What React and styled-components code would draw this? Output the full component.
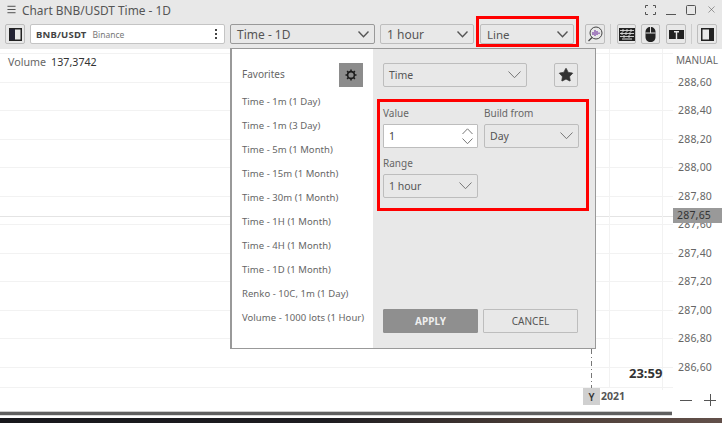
import React from "react";
import styled, { createGlobalStyle } from "styled-components";
import { Menu, X, Star } from "lucide-react";

const Global = createGlobalStyle`
  html, body { margin: 0; padding: 0; background: #fff; overflow: hidden; }
  * { box-sizing: border-box; }
  body { font-family: "Noto Sans", "Open Sans", sans-serif; color: #555; }
`;

const Page = styled.div`
  width: 722px; height: 423px; display: flex; flex-direction: column; background: #fff; overflow: hidden;
`;
const TitleBar = styled.div`
  height: 24px; background: #e8e8e8; display: flex; align-items: center; padding: 0 5px 5px 6px; flex: none;
  color: #555; font-size: 11.9px;
`;
const TitleText = styled.span` margin-left: 5px; flex: 1; `;
const WinIcons = styled.div` display: flex; gap: 10px; align-items: center; color: #555; `;
const Toolbar = styled.div`
  height: 25px; background: #e8e8e8; display: flex; align-items: flex-start; padding-left: 5px; flex: none;
`;
const IconBtn = styled.button`
  width: ${p => p.$w || 20}px; height: 20px; border: 1px solid #bdbdbd; border-radius: 2px; background: #e8e8e8; padding: 0;
  display: flex; align-items: center; justify-content: center; margin-left: ${p => p.$ml || 0}px; flex: none; color: #333;
`;
const SymbolBox = styled.div`
  width: 195px; height: 20px; margin-left: 5px; background: #fff; border: 1px solid #c4c4c4; border-radius: 2px;
  display: flex; align-items: center; padding: 0 6px 0 5px; font-size: 9.5px; flex: none;
`;
const Sym = styled.b` color: #444; letter-spacing: .2px; `;
const Exch = styled.span` color: #777; font-size: 8.5px; margin-left: 6px; flex: 1; `;
const Dots = styled.span`
  display: flex; flex-direction: column; gap: 2px; margin-right: 1px;
  i { width: 2px; height: 2px; background: #444; display: block; }
`;
const Select = styled.div`
  width: ${p => p.$w}px; height: ${p => p.$h || 20}px; margin-left: ${p => p.$ml || 0}px; flex: none;
  border: 1px solid ${p => p.$dark ? "#999" : "#bdbdbd"}; border-radius: 2px; background: #e8e8e8;
  display: flex; align-items: center; justify-content: space-between; padding: 0 5px 0 ${p => p.$pl || 6}px;
  font-size: ${p => p.$fs || 12}px; color: #555;
`;
const LineHighlight = styled.div`
  width: 103px; height: 28px; margin: -8px 0 0 2px; border: 3px solid #f00; padding: 5px 0 0 1px; flex: none; border-bottom-width: 0;
  box-shadow: 0 3px 0 #f00;
`;
const Sep = styled.span` width: 1px; height: 20px; background: #ccc; margin: 0 ${p => p.$mr || 5}px 0 5px; flex: none; `;

const Body = styled.div` flex: 1; display: flex; min-height: 0; `;
const Plot = styled.div` position: relative; width: 673px; flex: none; height: 100%; padding: 6px 8px; `;
const Grid = styled.svg` position: absolute; left: 0; top: 0; `;
const Legend = styled.div` position: relative; font-size: 10.7px; color: #666; display: flex; gap: 5px; `;
const LegendVal = styled.span` color: #333; `;
const Axis = styled.div` flex: 1; display: flex; flex-direction: column; position: relative; `;
const Manual = styled.div` font-size: 10px; color: #666; height: 18.5px; padding: 4px 0 0 3px; `;
const Prices = styled.div` display: flex; flex-direction: column; `;
const Price = styled.div` height: 28.5px; line-height: 28.5px; font-size: 10.5px; color: #666; padding-left: 5px; letter-spacing: .2px; `;
const PriceTag = styled.div`
  position: absolute; left: 0; right: 0; top: 159px; height: 15px; background: #999; color: #333; font-size: 10.5px;
  line-height: 15px; padding-left: 4px; letter-spacing: .2px;
`;
const Zoomers = styled.div`
  position: absolute; left: 7px; bottom: 12px; display: flex; gap: 12px; align-items: center;
`;

const Dialog = styled.div`
  position: absolute; left: 230px; top: -1px; width: 366px; height: 301px; display: flex;
  border: 1px solid #999; background: #e8e8e8; box-shadow: inset 1px 0 0 #999;
`;
const Favs = styled.div`
  width: 141px; background: #fff; margin-left: 1px; padding: 14px 0 0 10px; flex: none;
`;
const FavHead = styled.div`
  height: 24px; display: flex; align-items: center; justify-content: space-between; padding-right: 10px; font-size: 10px; color: #666;
`;
const FavTitle = styled.span` margin-top: -2px; `;
const GearBtn = styled.div`
  width: 24px; height: 24px; background: #8c8c8c; display: flex; align-items: center; justify-content: center;
`;
const FavList = styled.div` margin-top: 3px; `;
const FavItem = styled.div` height: 24px; line-height: 24px; font-size: 9.5px; letter-spacing: .05px; color: #666; white-space: nowrap; `;
const Form = styled.div`
  flex: 1; display: flex; flex-direction: column; padding: 14px 0 0 4px;
`;
const TopRow = styled.div` display: flex; padding-left: 6px; align-items: center; `;
const StarBtn = styled.div`
  width: 24px; height: 24px; margin-left: 27px; border: 1px solid #bdbdbd; border-radius: 2px; display: flex; align-items: center; justify-content: center; color: #333;
`;
const RedBox = styled.div`
  width: 212px; height: 112px; margin-top: 12px; border: 3px solid #f00; padding: 5px 0 0 3px;
  display: grid; grid-template-columns: 95px 95px; column-gap: 6px; grid-auto-rows: 50px; align-content: start;
`;
const Field = styled.div` display: flex; flex-direction: column; `;
const Label = styled.div` font-size: 10px; color: #666; height: 17px; line-height: 13px; `;
const NumberInput = styled.div`
  height: 24px; background: #fff; border: 1px solid #bdbdbd; border-radius: 1px; display: flex; align-items: center;
  justify-content: space-between; padding: 0 4px 0 5px; font-size: 10.5px; color: #444;
`;
const Steps = styled.div` display: flex; flex-direction: column; gap: 3px; `;
const Actions = styled.div` margin-top: 98px; display: flex; gap: 5px; padding-left: 6px; `;
const Btn = styled.div`
  width: 95px; height: 24px; border-radius: 1px; display: flex; align-items: center; justify-content: center; font-size: 10px;
  background: ${p => p.$primary ? "#8f8f8f" : "#e8e8e8"}; color: ${p => p.$primary ? "#eee" : "#555"};
  border: 1px solid ${p => p.$primary ? "#8f8f8f" : "#bdbdbd"}; font-weight: ${p => p.$primary ? 700 : 400};
`;
const Time = styled.div`
  position: absolute; left: 629px; top: 315px; font-size: 13px; font-weight: 700; color: #333;
`;
const YBadge = styled.div`
  position: absolute; left: 583px; top: 339px; width: 17px; height: 17px; background: #d0d0d0; color: #333;
  font-size: 10px; font-weight: 600; display: flex; align-items: center; justify-content: center;
`;
const Year = styled.div` position: absolute; left: 601px; top: 340px; font-size: 10.5px; font-weight: 700; color: #555; `;
const Scroll = styled.div`
  position: absolute; left: 0; top: 362.5px; width: 672px; height: 3px; background: #5f5f5f; box-shadow: 0 -1px 0 #ccc, 0 1px 0 #ddd;
`;
const Photo = styled.div` height: 5px; flex: none; background: linear-gradient(90deg, #17171b 0%, #1d1c20 45%, #4b3d37 75%, #62504a 100%); `;

const Chevron = ({ w, stroke, sw, up }) => (
  <svg width={w} height={Math.round(w / 2) + 1} viewBox={`0 0 ${w} ${Math.round(w / 2) + 1}`} fill="none">
    <path
      d={up
        ? `M.5 ${Math.round(w / 2)}L${w / 2} .8L${w - .5} ${Math.round(w / 2)}`
        : `M.5 .5L${w / 2} ${Math.round(w / 2) - .3}L${w - .5} .5`}
      stroke={stroke} strokeWidth={sw}
    />
  </svg>
);

const TimeSel = ({ w, ml, h, fs, dark, pl, children, thick }) => (
  <Select $w={w} $ml={ml} $h={h} $fs={fs} $dark={dark} $pl={pl}>
    <span>{children}</span>
    {thick ? <Chevron w={11} stroke="#555" sw={1.4} /> : <Chevron w={13} stroke="#777" sw={1} />}
  </Select>
);

const PanelIcon = ({ right }) => (
  <svg width="13" height="13" viewBox="0 0 13 13">
    <rect x=".75" y=".75" width="11.5" height="11.5" fill="none" stroke="#222" strokeWidth="1.5" />
    {right ? <rect x="8" y="1" width="4" height="11" fill="#222" /> : <rect x="1" y="1" width="5" height="11" fill="#223" />}
  </svg>
);

const GearIcon = () => (
  <svg width="12" height="12" viewBox="0 0 12 12" fill="none">
    <circle cx="6" cy="6" r="3.4" stroke="#1c1c1c" strokeWidth="1.6" />
    <path d="M6 .5v2M6 9.5v2M.5 6h2M9.5 6h2M2.1 2.1l1.3 1.3M8.6 8.6l1.3 1.3M2.1 9.9l1.3-1.3M8.6 3.4l1.3-1.3" stroke="#1c1c1c" strokeWidth="1.5" />
  </svg>
);

const prices = ["288,60","288,40","288,20","288,00","287,80","287,60","287,40","287,20","287,00","286,80","286,60"];
const favs = ["Time - 1m (1 Day)","Time - 1m (3 Day)","Time - 5m (1 Month)","Time - 15m (1 Month)","Time - 30m (1 Month)","Time - 1H (1 Month)","Time - 4H (1 Month)","Time - 1D (1 Month)","Renko - 10C, 1m (1 Day)","Volume - 1000 lots (1 Hour)"];
const gridYs = [4, 33, 61, 90, 118, 147, 175, 204, 232, 261, 289, 318, 338];

export default function App() {
  return (
    <Page>
      <Global />
      <TitleBar>
        <Menu size={11} color="#444" />
        <TitleText>Chart BNB/USDT Time - 1D</TitleText>
        <WinIcons>
          <svg width="11" height="10" viewBox="0 0 11 10" fill="none" stroke="#555"><path d="M.5 3V.5H3M8 .5h2.5V3M10.5 7v2.5H8M3 9.5H.5V7" /></svg>
          <svg width="10" height="10" viewBox="0 0 10 10" fill="none" stroke="#555"><path d="M0 9.5h10" /></svg>
          <svg width="10" height="10" viewBox="0 0 10 10" fill="none" stroke="#555"><rect x=".5" y=".5" width="9" height="9" rx="1" /></svg>
          <X size={11} strokeWidth={1.2} color="#555" />
        </WinIcons>
      </TitleBar>
      <Toolbar>
        <IconBtn><PanelIcon /></IconBtn>
        <SymbolBox><Sym>BNB/USDT</Sym><Exch>Binance</Exch><Dots><i /><i /><i /></Dots></SymbolBox>
        <TimeSel w={145} ml={5} dark thick>Time - 1D</TimeSel>
        <TimeSel w={94} ml={5} thick>1 hour</TimeSel>
        <LineHighlight><TimeSel w={94} thick fs={11.5}>Line</TimeSel></LineHighlight>
        <IconBtn $ml={6}>
          <svg width="16" height="16" viewBox="0 0 16 16" fill="none">
            <circle cx="9" cy="7" r="6" stroke="#444" />
            <path d="M5 11.5l-3.5 3.5" stroke="#444" strokeWidth="1.2" />
            <path d="M6 6v3M8 4v6M10 5v4M12 6.5v1.5" stroke="#7a3fa5" strokeWidth="1.2" />
          </svg>
        </IconBtn>
        <Sep $mr={6} />
        <IconBtn $w={19}>
          <svg width="16" height="13" viewBox="0 0 16 13"><rect width="16" height="13" fill="#222" /><path d="M1 2.5h14M1 5.5h14M1 8.5h14M4 1v3M8 1v3M12 1v3M3 4v3M7 4v3M11 4v3M5 7v3M10 7v3" stroke="#ddd" strokeWidth=".9" /><path d="M3 11h10" stroke="#ddd" /></svg>
        </IconBtn>
        <IconBtn $ml={5} $w={19}>
          <svg width="11" height="15" viewBox="0 0 11 15"><path d="M5.5 0C2.5 0 .5 2 .5 5v5c0 3 2 5 5 5s5-2 5-5V5c0-3-2-5-5-5z" fill="#222" /><path d="M.5 6h10M5.5 0v6" stroke="#ddd" /></svg>
        </IconBtn>
        <IconBtn $ml={6}>
          <svg width="15" height="9" viewBox="0 0 15 9"><rect width="15" height="9" fill="#222" /><path d="M5 1h5v1.6H8.2V9H6.8V2.6H5z" fill="#e8e8e8" /></svg>
        </IconBtn>
        <Sep />
        <IconBtn><PanelIcon right /></IconBtn>
      </Toolbar>
      <Body>
        <Plot>
          <Grid width="673" height="370">
            {gridYs.map(y => <line key={y} x1="0" x2="673" y1={y + 0.5} y2={y + 0.5} stroke="#f2f2f2" />)}
            <line x1="0" x2="673" y1="167.5" y2="167.5" stroke="#e4e4e4" />
            <line x1="609.5" x2="609.5" y1="0" y2="339" stroke="#f2f2f2" />
            <line x1="662.5" x2="662.5" y1="0" y2="341" stroke="#f2f2f2" />
            <line x1="591.5" x2="591.5" y1="300" y2="340" stroke="#777" strokeDasharray="5 3 1 3" />
          </Grid>
          <Legend>Volume <LegendVal>137,3742</LegendVal></Legend>
          <Time>23:59</Time>
          <YBadge>Y</YBadge>
          <Year>2021</Year>
          <Scroll />
          <Dialog>
            <Favs>
              <FavHead><FavTitle>Favorites</FavTitle><GearBtn><GearIcon /></GearBtn></FavHead>
              <FavList>{favs.map(f => <FavItem key={f}>{f}</FavItem>)}</FavList>
            </Favs>
            <Form>
              <TopRow>
                <TimeSel w={144} h={24} fs={10.5} pl={5}>Time</TimeSel>
                <StarBtn><Star size={16} fill="#333" strokeWidth={1} /></StarBtn>
              </TopRow>
              <RedBox>
                <Field>
                  <Label>Value</Label>
                  <NumberInput>1<Steps><Chevron w={11} stroke="#777" sw={1} up /><Chevron w={11} stroke="#777" sw={1} /></Steps></NumberInput>
                </Field>
                <Field>
                  <Label>Build from</Label>
                  <TimeSel w={95} h={24} fs={10.5} pl={5}>Day</TimeSel>
                </Field>
                <Field>
                  <Label>Range</Label>
                  <TimeSel w={95} h={24} fs={10.5} pl={5}>1 hour</TimeSel>
                </Field>
              </RedBox>
              <Actions>
                <Btn $primary>APPLY</Btn>
                <Btn>CANCEL</Btn>
              </Actions>
            </Form>
          </Dialog>
        </Plot>
        <Axis>
          <Manual>MANUAL</Manual>
          <Prices>{prices.map(p => <Price key={p}>{p}</Price>)}</Prices>
          <PriceTag>287,65</PriceTag>
          <Zoomers>
            <svg width="12" height="12" viewBox="0 0 12 12" stroke="#555"><path d="M0 6.5h12" /></svg>
            <svg width="12" height="12" viewBox="0 0 12 12" stroke="#555"><path d="M0 6.5h12M6.5 0v12" /></svg>
          </Zoomers>
        </Axis>
      </Body>
      <Photo />
    </Page>
  );
}
